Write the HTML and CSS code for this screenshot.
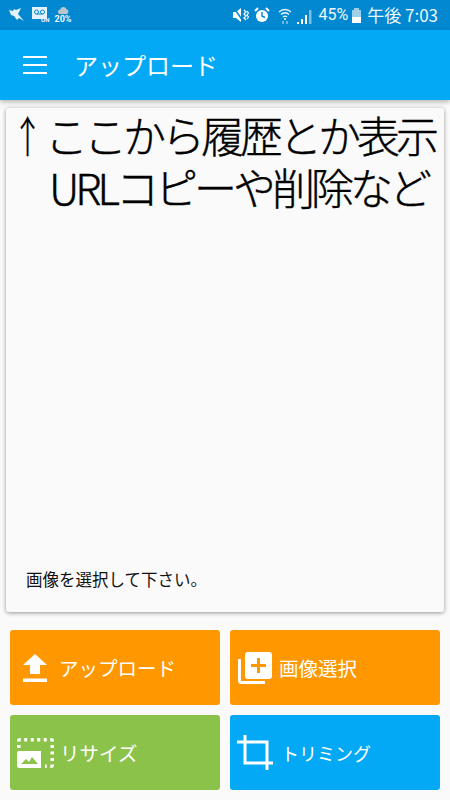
FILE: index.html
```html
<!DOCTYPE html>
<html lang="ja">
<head>
<meta charset="utf-8">
<title>アップロード</title>
<link rel="stylesheet" href="styles.css">
</head>
<body>
<div class="status">
  <div class="status-left">
    <svg class="si-bird" viewBox="0 0 16 14"><path d="M0 2l4 1 1-2 2 1 5-2-3 6 6 7-5-3-2 2-3-4-3-1z" fill="#e3f2fb"/></svg>
    <div class="si-vm"><svg viewBox="0 0 15 12"><rect width="15" height="12" fill="#e3f2fb"/><circle cx="4.500" cy="5" r="2" fill="none" stroke="#0288d1"/><circle cx="10.500" cy="5" r="2" fill="none" stroke="#0288d1"/><path d="M4.500 7h6" stroke="#0288d1"/></svg><span>ON</span></div>
    <div class="si-weather"><svg viewBox="0 0 14 8"><path d="M3 8a2.500 2.500 0 0 1 0-5 4 4 0 0 1 7.500-.5A3 3 0 0 1 11 8z" fill="#b9c6cf"/></svg><span>20%</span></div>
  </div>
  <div class="status-right">
    <svg class="si-mute" viewBox="0 0 16 14"><path d="M0 4h3l5-4v14l-5-4H0z" fill="#fff"/><path d="M1 0l9 13" stroke="#0288d1" stroke-width="1.500"/><path d="M11 2l2 2-2 2 2 2-2 2 2 2M14 3l1.500 2-1.500 2 1.500 2-1.500 2" fill="none" stroke="#fff" stroke-width="1.200"/></svg>
    <svg class="si-alarm" viewBox="0 0 16 16"><circle cx="8" cy="9" r="6" fill="#fff"/><path d="M1 4l3-3M15 4l-3-3" stroke="#fff" stroke-width="2"/><path d="M8 5v4l3 1.500" fill="none" stroke="#0288d1" stroke-width="1.400"/></svg>
    <svg class="si-wifi" viewBox="0 0 14 17"><path d="M1 5a8.500 8.500 0 0 1 12 0M3 7.500a5.500 5.500 0 0 1 8 0M5 10a2.800 2.800 0 0 1 4 0" fill="none" stroke="#eaf5fb" stroke-width="1.300"/><circle cx="7" cy="12" r="1" fill="#fff"/><path d="M5 14v3M9 14v3" stroke="#cfe6f3"/></svg>
    <svg class="si-signal" viewBox="0 0 15 14"><path d="M0 12h2v2H0z M4 9h2v5H4z M8 5h2v9H8z" fill="#fff"/><path d="M12 0h2.500v14H12z" fill="#7fbde0"/></svg>
    <span class="pct">45%</span>
    <div class="battery"><div class="battery-cap"></div><div class="battery-body"><div class="battery-fill"></div></div></div>
    <span class="clock">午後 7:03</span>
  </div>
</div>
<header class="appbar">
  <div class="menu"><i></i><i></i><i></i></div>
  <h1 class="title">アップロード</h1>
</header>
<main class="card">
  <div class="note">
    <div class="note-first"><span class="arrow">↑</span>ここから履歴とか表示</div>
    <div class="note-second">URLコピーや削除など</div>
  </div>
  <p class="hint">画像を選択して下さい。</p>
</main>
<div class="actions">
  <button class="btn orange">
    <svg class="ic-upload" viewBox="0 0 24 28"><path d="M7 20V11H0L12 0l12 11h-7v9zM0 24.500h24V28H0z" fill="#fff"/></svg>
    <span>アップロード</span>
  </button>
  <button class="btn orange">
    <svg class="ic-add" viewBox="0 0 34 32"><rect x="7" y="0" width="27" height="27" rx="3" fill="#fff"/><path d="M20.500 6v15M13 13.500h15" stroke="#ff9800" stroke-width="3"/><path d="M1.500 7v21.500a2 2 0 0 0 2 2H27" fill="none" stroke="#fff" stroke-width="3"/></svg>
    <span>画像選択</span>
  </button>
  <button class="btn green">
    <svg class="ic-resize" viewBox="0 0 37 30"><path d="M1.750 10V3a1.250 1.250 0 0 1 1.250-1.250h31a1.250 1.250 0 0 1 1.250 1.250v24a1.250 1.250 0 0 1-1.250 1.250h-6" fill="none" stroke="#fff" stroke-width="3.500" stroke-dasharray="3 3.500"/><path d="M0 15a2 2 0 0 1 2-2h22v17H2a2 2 0 0 1-2-2z" fill="#fff"/><path d="M4 26l5-5 3 3 3-5 6 7z" fill="#8bc34a"/></svg>
    <span>リサイズ</span>
  </button>
  <button class="btn blue">
    <svg class="ic-crop" viewBox="0 0 36 35"><path d="M8 0v28h28M0 7h30v28" fill="none" stroke="#fff" stroke-width="3"/></svg>
    <span class="t-crop">トリミング</span>
  </button>
</div>
</body>
</html>
```
FILE: styles.css
```css
* { box-sizing: border-box; }
html, body { margin: 0; height: 800px; overflow: hidden; }
body {
  width: 450px;
  background: #fafafa;
  font-family: "Noto Sans CJK JP", "Noto Sans", sans-serif;
  color: #000;
}
.status {
  height: 30px;
  background: #0288d1;
  display: flex;
  justify-content: space-between;
  align-items: center;
  color: #eef7fc;
}
.status-left { display: flex; align-items: center; padding-left: 9px; }
.si-bird { width: 16px; height: 14px; margin-right: 7px; }
.si-vm { position: relative; width: 16px; height: 14px; margin-right: 7px; margin-top: -2px; }
.si-vm svg { display: block; width: 15px; height: 12px; }
.si-vm span { position: absolute; left: 9px; top: 9px; font: 700 6px/8px "Roboto", sans-serif; }
.si-weather { width: 16px; display: flex; flex-direction: column; align-items: center; }
.si-weather svg { width: 13px; height: 7px; display: block; }
.si-weather span { font: 700 9px/10px "Roboto", sans-serif; }
.status-right { display: flex; align-items: center; padding-right: 12px; }
.si-mute { width: 16px; height: 14px; margin-right: 5px; }
.si-alarm { width: 16px; height: 16px; margin-right: 8px; }
.si-wifi { width: 14px; height: 17px; margin-right: 5px; }
.si-signal { width: 15px; height: 14px; margin-right: 6px; margin-top: 4px; }
.pct { font: 400 16px/20px "Roboto", sans-serif; margin-right: 4px; }
.battery { width: 9px; margin-right: 6px; }
.battery-cap { width: 5px; height: 2px; margin: 0 auto; background: #9fd0ea; }
.battery-body { height: 13px; background: #9fd0ea; display: flex; align-items: flex-end; }
.battery-fill { width: 100%; height: 6px; background: #fff; }
.clock { font-size: 17px; line-height: 20px; }
.appbar {
  height: 70px;
  background: #03a9f4;
  display: flex;
  align-items: center;
  padding-left: 23px;
  box-shadow: 0 2px 5px rgba(0, 0, 0, 0.28);
  position: relative;
}
.menu { width: 24px; display: flex; flex-direction: column; gap: 6px; margin-right: 27px; }
.menu i { display: block; height: 2px; background: #fff; }
.title { margin: 0; font-size: 24px; font-weight: 400; line-height: 32px; color: #fff; }
.card {
  width: 438px;
  height: 504px;
  margin: 8px 6px 0;
  background: #fafafa;
  border-radius: 3px;
  box-shadow: 0 1px 4px rgba(0, 0, 0, 0.4);
  display: flex;
  flex-direction: column;
  justify-content: space-between;
}
.note { font-size: 43px; font-weight: 300; -webkit-text-stroke: 0.4px #000; line-height: 52px; letter-spacing: -4px; white-space: nowrap; }
.note-first { padding-left: 11px; }
.note-second { padding-left: 43px; }
.arrow {
  display: inline-block;
  width: 43px;
  margin: 0 -4px 0 -11px;
  text-align: center;
  letter-spacing: 0;
  transform: scaleX(0.7);
}
.hint { margin: 0 0 21px 20px; font-size: 16.5px; line-height: 24px; color: #111; }
.actions {
  display: grid;
  grid-template-columns: 210px 210px;
  grid-auto-rows: 75px;
  gap: 10px;
  margin: 18px 10px 0;
}
.btn {
  border: 0;
  border-radius: 3px;
  padding: 0;
  display: flex;
  align-items: center;
  color: #fff;
  font-family: inherit;
  font-size: 19.5px;
  font-weight: 400;
  text-align: left;
}
.orange { background: #ff9800; }
.green { background: #8bc34a; }
.blue { background: #03a9f4; }
.ic-upload { width: 24px; height: 28px; margin: 0 12px 0 13px; }
.ic-add { width: 34px; height: 32px; margin: 0 7px 0 8px; }
.ic-resize { width: 37px; height: 30px; margin: 0 6px 0 7px; }
.ic-crop { width: 36px; height: 35px; margin: 0 8px 0 7px; }
.t-crop { font-size: 18px; }
```
